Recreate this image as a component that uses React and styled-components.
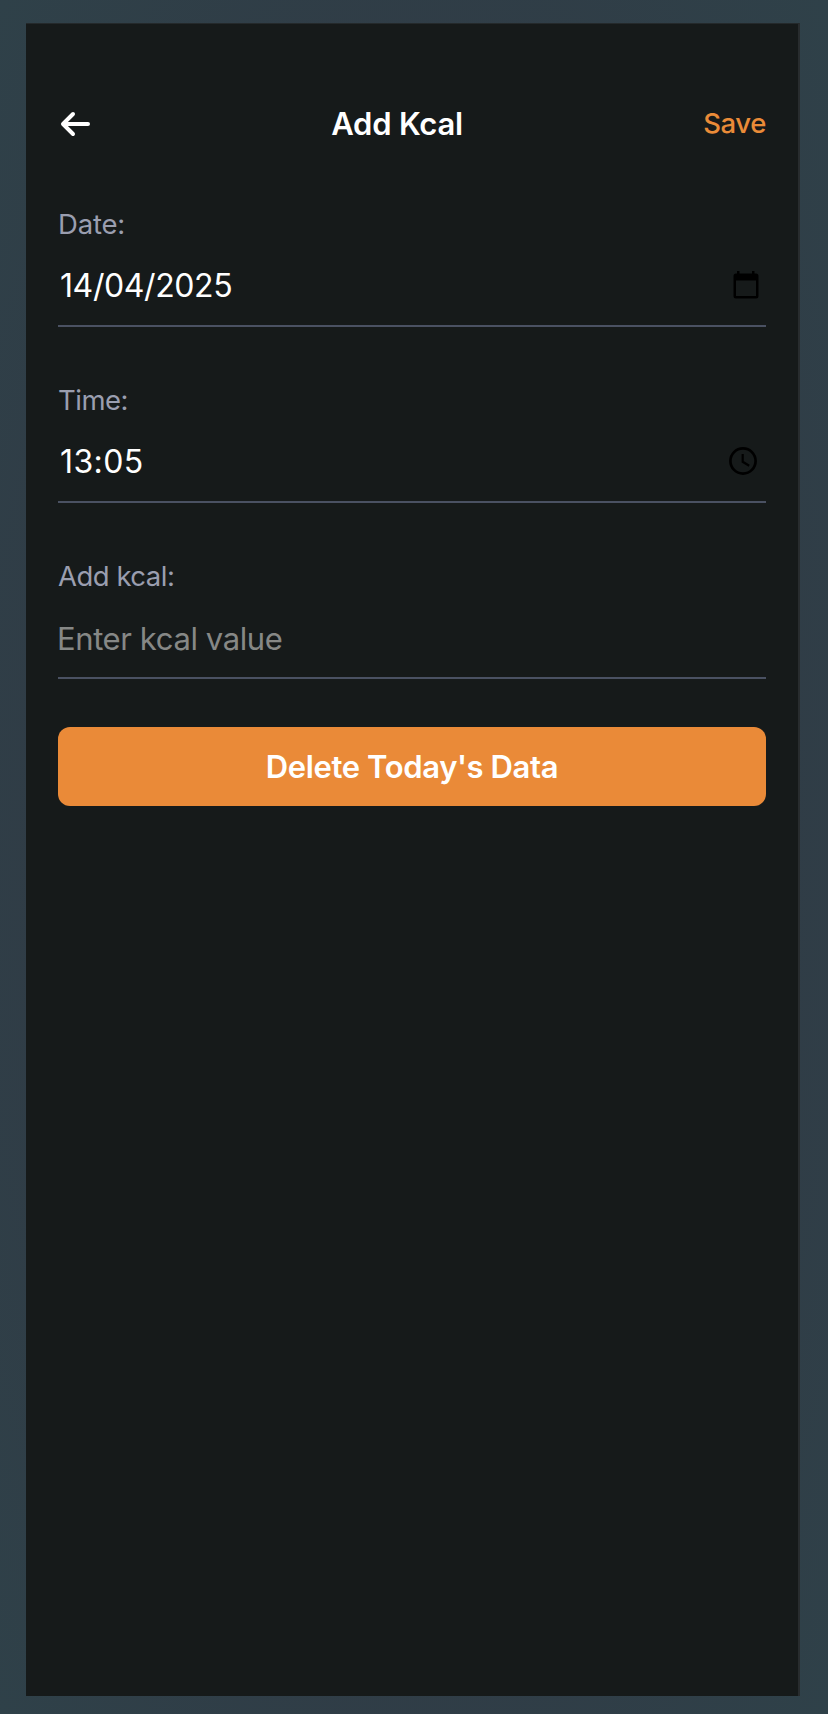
import React from 'react';
import styled, { createGlobalStyle } from 'styled-components';

const GlobalStyle = createGlobalStyle`
  * { box-sizing: border-box; }
  body {
    margin: 0;
    background: #303d46;
    font-family: Inter, "Liberation Sans", sans-serif;
  }
`;

const Page = styled.div`
  min-height: 1714px;
  padding: 23px 28px 18px 26px;
  background: radial-gradient(ellipse at center, #303c46 60%, #2f4149 100%);
`;

const Screen = styled.main`
  height: 1673px;
  padding: 68px 32px 0 32px;
  background: #161a1a;
  border-top: 1px solid #24292b;
  border-right: 2px solid #282c2e;
`;

const Header = styled.header`
  display: flex;
  align-items: center;
  justify-content: space-between;
  height: 64px;
`;

const IconButton = styled.button`
  display: flex;
  padding: 0;
  border: 0;
  background: none;
  color: #fff;
`;

const Title = styled.h1`
  margin: 0;
  padding-right: 3px;
  font-size: 31px;
  font-weight: 600;
  line-height: 40px;
  letter-spacing: -0.2px;
  color: #fff;
`;

const SaveButton = styled.button`
  padding: 0 0 2px;
  border: 0;
  background: none;
  font: 500 27.5px/38px Inter, "Liberation Sans", sans-serif;
  letter-spacing: -0.4px;
  color: #ea8b38;
`;

const Form = styled.form`
  display: flex;
  flex-direction: column;
  gap: 53px;
  padding-top: 48px;
`;

const Field = styled.div`
  display: flex;
  flex-direction: column;
`;

const Label = styled.label`
  font-size: 27.5px;
  line-height: 40px;
  letter-spacing: ${(p) => p.$track}px;
  color: #9a9eaf;
`;

const Control = styled.div`
  display: flex;
  align-items: center;
  justify-content: space-between;
  height: 83px;
  padding: ${(p) => (p.$inset ? 2 : 4)}px ${(p) => p.$end || 0}px 0 ${(p) => (p.$inset ? 2 : 0)}px;
  border-bottom: 2px solid #4a5162;

  svg {
    margin-bottom: 2px;
  }
`;

const Value = styled.span`
  margin-left: ${(p) => (p.$muted ? -1 : 0)}px;
  font-size: ${(p) => (p.$muted ? 31 : 32)}px;
  line-height: 40px;
  letter-spacing: ${(p) => p.$track}px;
  color: ${(p) => (p.$muted ? '#868886' : '#fff')};
  white-space: nowrap;
`;

const DeleteButton = styled.button`
  display: block;
  width: 100%;
  height: 79px;
  margin-top: 48px;
  padding: 0;
  border: 0;
  border-radius: 12px;
  background: #ea8a38;
  color: #fff;
  font: 600 31px/40px Inter, "Liberation Sans", sans-serif;
  letter-spacing: -0.38px;
`;

const BackArrow = () => (
  <svg width="36" height="36" viewBox="0 0 36 36" fill="none" stroke="currentColor" strokeWidth="4" strokeLinecap="round" strokeLinejoin="round">
    <path d="M30 18H5.5M15 8L5 18L15 28" />
  </svg>
);

const CalendarIcon = () => (
  <svg width="26" height="28" viewBox="0 0 26 28" fill="#000">
    <path fillRule="evenodd" d="M4 0H6.5V2.5H19V0H21.5V2.5H23Q25.5 2.5 25.5 5V25Q25.5 27.5 23 27.5H3Q.5 27.5 .5 25V5Q.5 2.5 3 2.5H4ZM3 9.5V25H23V9.5Z" />
  </svg>
);

const ClockIcon = () => (
  <svg width="28" height="28" viewBox="0 0 28 28" fill="none" stroke="#000" strokeWidth="2.7">
    <circle cx="14" cy="14" r="12.6" />
    <path d="M13.7 7V14.8L20.2 18.7" strokeWidth="2.2" />
  </svg>
);

export default function App() {
  return (
    <>
      <GlobalStyle />
      <Page>
        <Screen>
          <Header>
            <IconButton aria-label="Back"><BackArrow /></IconButton>
            <Title>Add Kcal</Title>
            <SaveButton>Save</SaveButton>
          </Header>
          <Form>
            <Field>
              <Label $track={-0.2}>Date:</Label>
              <Control $inset $end={7}>
                <Value $track={-0.4}>14/04/2025</Value>
                <CalendarIcon />
              </Control>
            </Field>
            <Field>
              <Label $track={-0.5}>Time:</Label>
              <Control $inset $end={9}>
                <Value $track={0.4}>13:05</Value>
                <ClockIcon />
              </Control>
            </Field>
            <Field>
              <Label $track={-0.5}>Add kcal:</Label>
              <Control>
                <Value $muted $track={-0.4}>Enter kcal value</Value>
              </Control>
            </Field>
          </Form>
          <DeleteButton>Delete Today's Data</DeleteButton>
        </Screen>
      </Page>
    </>
  );
}
